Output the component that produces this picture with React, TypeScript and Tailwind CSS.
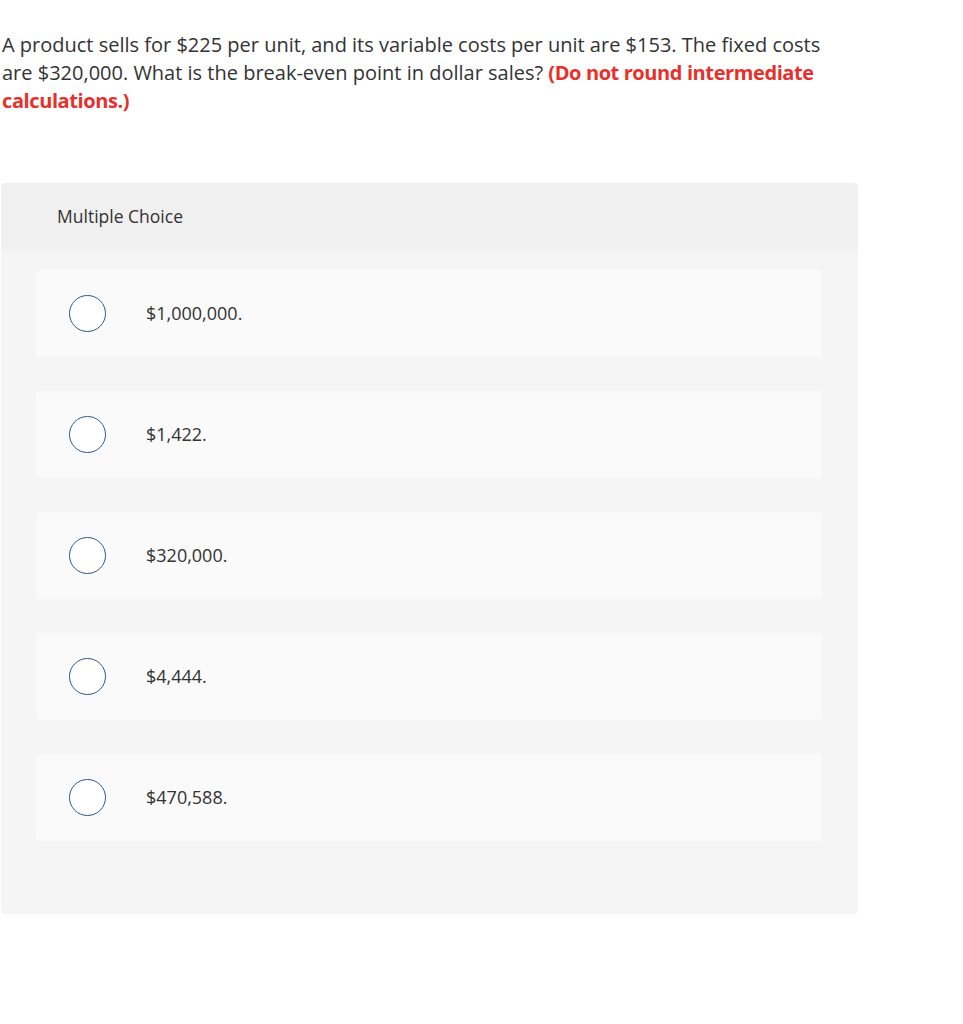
const options = ['$1,000,000.', '$1,422.', '$320,000.', '$4,444.', '$470,588.'];

export default function App() {
  return (
    <div className="min-h-screen bg-white text-[#333333] pt-[31px]" style={{ fontFamily: '"Open Sans", Lato, sans-serif' }}>
      <p className="pl-[2px] w-[940px] text-[20px] leading-[28px]">
        A product sells for $225 per unit, and its variable costs per unit are $153. The fixed costs
        <br />
        are $320,000. What is the break-even point in dollar sales?{' '}
        <span className="font-bold text-[#e8302a] tracking-[-0.4px]">
          (Do not round intermediate
          <br />
          calculations.)
        </span>
      </p>

      <div className="ml-[1px] mt-[68px] w-[857px] rounded-[4px] bg-[#f5f5f5] overflow-hidden">
        <div className="h-[66px] bg-[#f0f0f0] pl-[56px] flex items-center text-[17.5px]">Multiple Choice</div>
        <div className="flex flex-col gap-[34px] pt-[21px] pb-[73px] pl-[35px] pr-[36px]">
          {options.map((opt) => (
            <label key={opt} className="h-[87px] rounded-[4px] bg-[#fafafa] flex items-center pl-[33px] cursor-pointer">
              <span className="w-[37px] h-[37px] rounded-full border-[1.5px] border-[#2d5a8a] bg-white shrink-0" />
              <span className="ml-[40px] text-[18px]">{opt}</span>
            </label>
          ))}
        </div>
      </div>
    </div>
  );
}
